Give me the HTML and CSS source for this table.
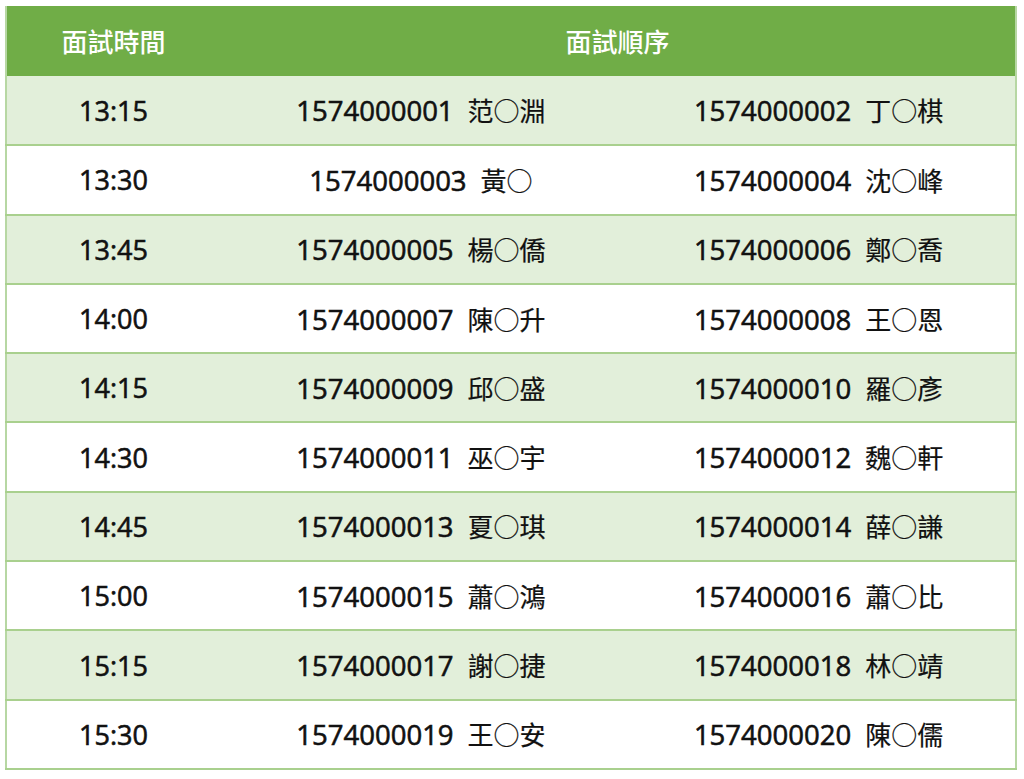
FILE: index.html
```html
<!DOCTYPE html>
<html lang="zh-Hant">
<head>
<meta charset="utf-8">
<title>面試順序</title>
<link rel="stylesheet" href="styles.css">
</head>
<body>
<table class="schedule">
  <colgroup>
    <col class="c-time">
    <col class="c-a">
    <col class="c-b">
  </colgroup>
  <thead>
    <tr class="head">
      <th>面試時間</th>
      <th colspan="2">面試順序</th>
    </tr>
  </thead>
  <tbody>
    <tr class="odd"><td>13:15</td><td><span class="id">1574000001</span><span class="nm">范○淵</span></td><td><span class="id">1574000002</span><span class="nm">丁○棋</span></td></tr>
    <tr><td>13:30</td><td><span class="id">1574000003</span><span class="nm">黃○</span></td><td><span class="id">1574000004</span><span class="nm">沈○峰</span></td></tr>
    <tr class="odd"><td>13:45</td><td><span class="id">1574000005</span><span class="nm">楊○僑</span></td><td><span class="id">1574000006</span><span class="nm">鄭○喬</span></td></tr>
    <tr><td>14:00</td><td><span class="id">1574000007</span><span class="nm">陳○升</span></td><td><span class="id">1574000008</span><span class="nm">王○恩</span></td></tr>
    <tr class="odd"><td>14:15</td><td><span class="id">1574000009</span><span class="nm">邱○盛</span></td><td><span class="id">1574000010</span><span class="nm">羅○彥</span></td></tr>
    <tr><td>14:30</td><td><span class="id">1574000011</span><span class="nm">巫○宇</span></td><td><span class="id">1574000012</span><span class="nm">魏○軒</span></td></tr>
    <tr class="odd"><td>14:45</td><td><span class="id">1574000013</span><span class="nm">夏○琪</span></td><td><span class="id">1574000014</span><span class="nm">薛○謙</span></td></tr>
    <tr><td>15:00</td><td><span class="id">1574000015</span><span class="nm">蕭○鴻</span></td><td><span class="id">1574000016</span><span class="nm">蕭○比</span></td></tr>
    <tr class="odd"><td>15:15</td><td><span class="id">1574000017</span><span class="nm">謝○捷</span></td><td><span class="id">1574000018</span><span class="nm">林○靖</span></td></tr>
    <tr><td>15:30</td><td><span class="id">1574000019</span><span class="nm">王○安</span></td><td><span class="id">1574000020</span><span class="nm">陳○儒</span></td></tr>
  </tbody>
</table>
</body>
</html>
```
FILE: styles.css
```css
html, body {
  margin: 0;
  padding: 0;
  background: #ffffff;
}
body {
  padding: 6px 0 0 5px;
  font-family: "Open Sans", "Noto Sans CJK TC", sans-serif;
  color: #111111;
}
.schedule {
  width: 1010px;
  border-collapse: collapse;
  table-layout: fixed;
  border-left: 2px solid #b7d7a3;
  border-right: 2px solid #b7d7a3;
}
.c-time { width: 214px; }
.c-a { width: 402px; }
.c-b { width: 394px; }
.head {
  background: #70ad47;
  height: 70px;
}
.head th {
  color: #ffffff;
  font-family: "Noto Sans CJK TC", sans-serif;
  font-weight: 500;
  font-size: 26px;
  text-align: center;
  padding: 0 0 2px 0;
  border: 0;
}
tbody tr {
  height: 69.3px;
  background: #ffffff;
}
tbody tr.odd {
  background: #e2efda;
}
tbody td {
  text-align: center;
  padding: 0;
  font-size: 27px;
  font-weight: 400;
  -webkit-text-stroke: 0.6px #111111;
  border-bottom: 2px solid #a9d08e;
  white-space: nowrap;
}
.id {
  font-size: 27.5px;
}
.nm {
  font-family: "Noto Sans CJK TC", sans-serif;
  font-weight: 400;
  font-size: 26px;
  margin-left: 14px;
  -webkit-text-stroke: 0.2px #111111;
}
```
